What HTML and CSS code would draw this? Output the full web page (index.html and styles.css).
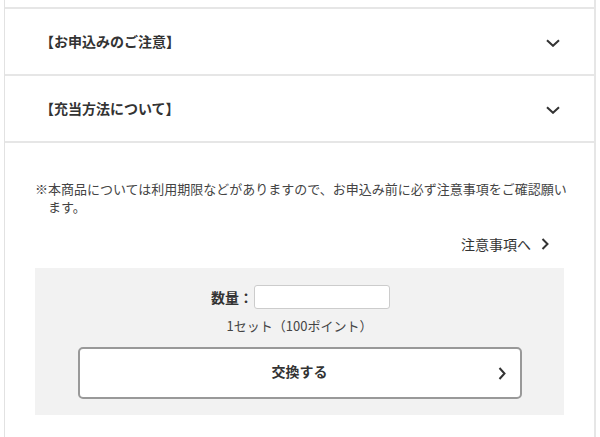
FILE: index.html
```html
<!DOCTYPE html>
<html lang="ja">
<head>
<meta charset="utf-8">
<link rel="stylesheet" href="styles.css">
</head>
<body>
<div class="wrap">
  <div class="acc">
    <div class="acc-row">
      <span class="acc-title">【お申込みのご注意】</span>
      <svg class="chev-down" width="14" height="8" viewBox="0 0 14 8"><path d="M1 1.2 L7 6.8 L13 1.2" fill="none" stroke="#333" stroke-width="2"/></svg>
    </div>
    <div class="acc-row">
      <span class="acc-title">【充当方法について】</span>
      <svg class="chev-down" width="14" height="8" viewBox="0 0 14 8"><path d="M1 1.2 L7 6.8 L13 1.2" fill="none" stroke="#333" stroke-width="2"/></svg>
    </div>
  </div>
  <div class="main">
    <p class="note">※本商品については利用期限などがありますので、お申込み前に必ず注意事項をご確認願います。</p>
    <div class="link-row">
      <a class="link">注意事項へ<svg class="chev-right" width="8" height="12" viewBox="0 0 8 12"><path d="M1.5 1 L6.5 6 L1.5 11" fill="none" stroke="#333" stroke-width="2"/></svg></a>
    </div>
    <div class="box">
      <div class="qty-row">
        <label class="qty-label">数量：</label>
        <input class="qty-input" type="text">
      </div>
      <div class="unit">1セット（100ポイント）</div>
      <button class="btn"><span>交換する</span><svg class="chev-right btn-chev" width="8" height="13" viewBox="0 0 8 13"><path d="M1.5 1 L6.5 6.5 L1.5 12" fill="none" stroke="#333" stroke-width="2"/></svg></button>
    </div>
  </div>
</div>
</body>
</html>
```
FILE: styles.css
```css
html, body {
  margin: 0;
  padding: 0;
  background: #fff;
}
body {
  font-family: "Noto Sans CJK JP", "Noto Sans", sans-serif;
  color: #333;
}
.wrap {
  margin-left: 4px;
  width: 589px;
  min-height: 437px;
  border-left: 1px solid #e2e2e2;
  border-right: 2px solid #e6e6e6;
  padding-top: 7px;
  box-sizing: content-box;
}
.acc-row {
  height: 65px;
  border-top: 2px solid #e6e6e6;
  display: flex;
  align-items: center;
  justify-content: space-between;
  padding: 0 34px 0 35px;
}
.acc-row:last-child {
  border-bottom: 2px solid #e6e6e6;
}
.acc-title {
  font-size: 14px;
  font-weight: bold;
  color: #333;
  line-height: 20px;
  margin-top: -1px;
}
.chev-down {
  display: block;
  margin-top: 3px;
}
.main {
  padding: 37px 30px 0 30px;
}
.note {
  margin: 0 -8px 0 0;
  font-size: 13px;
  line-height: 18px;
  color: #444;
  padding-left: 1em;
  text-indent: -1em;
}
.link-row {
  display: flex;
  justify-content: flex-end;
  padding-right: 15px;
  margin-top: 15px;
  height: 26px;
}
.link {
  display: flex;
  align-items: center;
  gap: 10px;
  font-size: 14px;
  color: #333;
  line-height: 20px;
}
.box {
  margin-top: 11px;
  background: #f2f2f2;
  padding: 17px 43px 16px 43px;
  display: flex;
  flex-direction: column;
  align-items: center;
}
.qty-row {
  display: flex;
  align-items: center;
  height: 24px;
  margin-left: 2px;
}
.qty-label {
  font-size: 14px;
  font-weight: bold;
  color: #333;
}
.qty-input {
  width: 136px;
  height: 24px;
  box-sizing: border-box;
  border: 1px solid #ccc;
  border-radius: 3px;
  background: #fff;
  margin: 0 0 0 1px;
  padding: 0 4px;
}
.unit {
  margin-top: 8px;
  font-size: 13px;
  line-height: 18px;
  color: #444;
}
.btn {
  margin-top: 12px;
  width: 444px;
  height: 52px;
  box-sizing: border-box;
  border: 2px solid #999;
  border-radius: 5px;
  background: #fff;
  position: relative;
  display: flex;
  align-items: center;
  justify-content: center;
  font-family: inherit;
  font-size: 14px;
  font-weight: bold;
  color: #333;
  padding: 0 0 4px 0;
}
.btn-chev {
  position: absolute;
  right: 14px;
  top: 18px;
}
```
